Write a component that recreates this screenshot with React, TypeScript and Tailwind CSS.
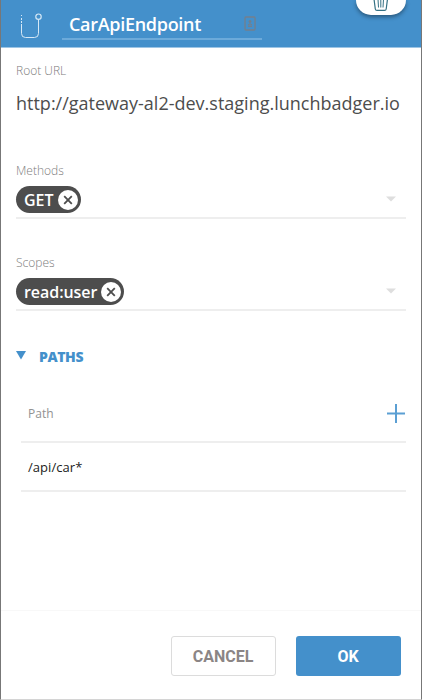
import React from "react";

function EndpointIcon() {
  return (
    <svg width="22" height="26" viewBox="0 0 22 26" fill="none" stroke="#d5e8f6" strokeWidth="1">
      <path d="M1.500 2v1M1.500 5v2M1.500 8v2" />
      <path d="M1.500 11v9.500q0 4 4 4h9q4 0 4-4V7" />
      <circle cx="18.500" cy="3.700" r="2.700" strokeWidth="1.200" />
    </svg>
  );
}

function CardIcon() {
  return (
    <svg className="mt-4 mr-[6px] ml-auto" width="12" height="15" viewBox="0 0 12 15" fill="none" stroke="#747f8d">
      <rect x="1" y="1" width="10" height="13" rx="1" strokeWidth="1.300" />
      <circle cx="6" cy="5.500" r="1" fill="#747f8d" />
      <path d="M4 9q2-3 4 0zM4 10.500h4" strokeWidth="1" />
    </svg>
  );
}

function TrashIcon() {
  return (
    <svg width="16" height="12" viewBox="0 0 16 12" fill="none" stroke="#347184" strokeWidth="1.200">
      <path d="M1 -1l1.300 10q.2 1.400 1.700 1.400h7.500q1.500 0 1.700-1.400L14.500 -1" />
      <path d="M5 -1l.5 8.500M7.800 -1v8.500M10.500 -1L10 7.500" strokeWidth="1" />
    </svg>
  );
}

function TagField({ label, tag, width }: { label: string; tag: string; width: string }) {
  return (
    <div className="h-[92px]">
      <div className="h-[23px] text-[12px] leading-4 font-light text-[#7d7d7d]">{label}</div>
      <div className="flex h-[33px] items-start justify-between border-b-2 border-[#eeeeee]">
        <div className={`flex h-[27px] items-center justify-between rounded-full bg-[#4d4d4d] pr-[3px] pl-2 text-white ${width}`}>
          <span className="pt-px text-[16px] leading-5 font-semibold tracking-[-0.05px]">{tag}</span>
          <span className="flex size-5 items-center justify-center rounded-full bg-white">
            <svg width="10" height="10" viewBox="0 0 10 10" stroke="#4d4d4d" strokeWidth="1.800">
              <path d="M1.200 1.200l7.600 7.600M8.800 1.200L1.200 8.800" />
            </svg>
          </span>
        </div>
        <svg className="mt-[10px] mr-[10px]" width="10" height="6" viewBox="0 0 10 6">
          <path d="M0 .5h10l-5 5z" fill="#dedede" />
        </svg>
      </div>
    </div>
  );
}

export default function App() {
  return (
    <div className="flex h-[700px] w-[422px] flex-col border-x border-b border-x-[#777] border-b-[#d4d4d4] bg-white font-['Open_Sans',sans-serif]">
      <header className="relative flex h-12 shrink-0 border-b border-[#9dc5e5] bg-[#4490cb]">
        <div className="flex w-[61px] pt-[13px] pl-[19px]"><EndpointIcon /></div>
        <div className="flex h-10 w-[200px] border-b-2 border-[#6caada] pl-[7px]">
          <span className="pt-[12px] text-[18px] leading-6 font-semibold tracking-[-0.3px] text-white">CarApiEndpoint</span>
          <CardIcon />
        </div>
        <button className="absolute top-0 right-[15px] flex h-[15px] w-[50px] justify-center rounded-b-[20px] bg-white shadow-[0_2px_4px_rgba(0,0,0,0.4)]"><TrashIcon /></button>
      </header>
      <main className="h-[562px] pt-[15px] pr-[15px] pl-[15px]">
        <div className="h-[100px]">
          <div className="text-[12px] leading-4 font-light text-[#7d7d7d]">Root URL</div>
          <div className="mt-3 text-[18px] leading-6 whitespace-nowrap text-[#4d4d4d]">http://gateway-al2-dev.staging.lunchbadger.io</div>
        </div>
        <TagField label="Methods" tag="GET" width="w-[65px]" />
        <TagField label="Scopes" tag="read:user" width="w-[108px]" />
        <div className="flex h-[39px] gap-[13px]">
          <svg className="mt-[4px]" width="10" height="9" viewBox="0 0 10 9"><path d="M0 0h10L5 8.500z" fill="#4490cb" /></svg>
          <span className="text-[14px] leading-5 font-extrabold tracking-[-0.4px] text-[#4490cb]">PATHS</span>
        </div>
        <div className="ml-[5px] flex h-[57px] items-center justify-between border-b-2 border-[#eeeeee] pl-[7px] text-[12px] text-[#929292]">
          <span>Path</span>
          <svg width="19" height="19" viewBox="0 0 19 19" stroke="#5b9fd3" strokeWidth="2"><path d="M9 0v19M0 9.500h18" /></svg>
        </div>
        <div className="ml-[5px] flex h-[49px] items-center border-b-2 border-[#eeeeee] pt-[2px] pl-[7px] text-[13px] tracking-[0.05px] text-[#222]">/api/car*</div>
      </main>
      <footer className="flex flex-1 gap-5 border-t border-[#f8f8f8] pt-[25px] pl-[170px] font-['Roboto',sans-serif] text-[16px] font-bold">
        <button className="h-10 w-[105px] rounded-[3px] border border-[#dcdcdc] pt-[2px] pr-px text-[#8b8585]">CANCEL</button>
        <button className="h-10 w-[105px] rounded-[3px] bg-[#4490cb] pt-[2px] pr-px text-white">OK</button>
      </footer>
    </div>
  );
}
